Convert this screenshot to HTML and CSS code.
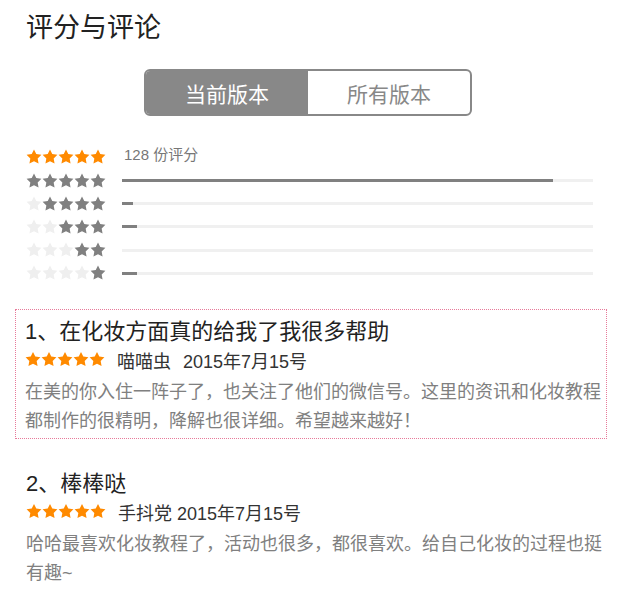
FILE: index.html
```html
<!DOCTYPE html>
<html lang="zh-CN">
<head>
    <meta charset="UTF-8">
    <meta name="viewport" content="width=device-width, initial-scale=1.0">
    <title>评分与评论</title>
    <link rel="stylesheet" href="styles.css">
</head>
<body>
    <svg class="defs" width="0" height="0">
        <symbol id="star" viewBox="0 0 24 24">
            <path d="M12 0.6l3.4 7 7.7 1.1-5.6 5.4 1.35 7.7L12 18.2l-6.85 3.6 1.35-7.7-5.6-5.4 7.7-1.1z"/>
        </symbol>
    </svg>

    <div class="page">
        <h2 class="title">评分与评论</h2>

        <div class="tabs">
            <div class="tab active">当前版本</div>
            <div class="tab">所有版本</div>
        </div>

        <div class="ratings">
            <div class="rating-row first">
                <div class="stars orange">
                    <svg><use href="#star"/></svg><svg><use href="#star"/></svg><svg><use href="#star"/></svg><svg><use href="#star"/></svg><svg><use href="#star"/></svg>
                </div>
                <span class="count">128 份评分</span>
            </div>
            <div class="rating-row">
                <div class="stars">
                    <svg><use href="#star"/></svg><svg><use href="#star"/></svg><svg><use href="#star"/></svg><svg><use href="#star"/></svg><svg><use href="#star"/></svg>
                </div>
                <div class="bar"><div class="fill" style="width: 91.5%"></div></div>
            </div>
            <div class="rating-row">
                <div class="stars">
                    <svg class="off"><use href="#star"/></svg><svg><use href="#star"/></svg><svg><use href="#star"/></svg><svg><use href="#star"/></svg><svg><use href="#star"/></svg>
                </div>
                <div class="bar"><div class="fill" style="width: 2.4%"></div></div>
            </div>
            <div class="rating-row">
                <div class="stars">
                    <svg class="off"><use href="#star"/></svg><svg class="off"><use href="#star"/></svg><svg><use href="#star"/></svg><svg><use href="#star"/></svg><svg><use href="#star"/></svg>
                </div>
                <div class="bar"><div class="fill" style="width: 3.2%"></div></div>
            </div>
            <div class="rating-row">
                <div class="stars">
                    <svg class="off"><use href="#star"/></svg><svg class="off"><use href="#star"/></svg><svg class="off"><use href="#star"/></svg><svg><use href="#star"/></svg><svg><use href="#star"/></svg>
                </div>
                <div class="bar"><div class="fill" style="width: 0%"></div></div>
            </div>
            <div class="rating-row">
                <div class="stars">
                    <svg class="off"><use href="#star"/></svg><svg class="off"><use href="#star"/></svg><svg class="off"><use href="#star"/></svg><svg class="off"><use href="#star"/></svg><svg><use href="#star"/></svg>
                </div>
                <div class="bar"><div class="fill" style="width: 3.2%"></div></div>
            </div>
        </div>

        <div class="review boxed">
            <h3 class="review-title">1、在化妆方面真的给我了我很多帮助</h3>
            <div class="review-meta">
                <div class="stars orange big">
                    <svg><use href="#star"/></svg><svg><use href="#star"/></svg><svg><use href="#star"/></svg><svg><use href="#star"/></svg><svg><use href="#star"/></svg>
                </div>
                <span class="author">喵喵虫</span>
                <span class="date">2015年7月15号</span>
            </div>
            <p class="review-text">在美的你入住一阵子了，也关注了他们的微信号。这里的资讯和化妆教程都制作的很精明，降解也很详细。希望越来越好！</p>
        </div>

        <div class="review">
            <h3 class="review-title">2、棒棒哒</h3>
            <div class="review-meta">
                <div class="stars orange big">
                    <svg><use href="#star"/></svg><svg><use href="#star"/></svg><svg><use href="#star"/></svg><svg><use href="#star"/></svg><svg><use href="#star"/></svg>
                </div>
                <span class="author tight">手抖党</span>
                <span class="date">2015年7月15号</span>
            </div>
            <p class="review-text">哈哈最喜欢化妆教程了，活动也很多，都很喜欢。给自己化妆的过程也挺有趣~</p>
        </div>
    </div>
</body>
</html>
```

FILE: styles.css
```css
body {
    margin: 0;
    font-family: "Liberation Sans", "Noto Sans CJK SC", sans-serif;
    color: #333;
    background: #fff;
}
.defs {
    position: absolute;
}
.page {
    padding: 10px 14px 0 15px;
}
.title {
    margin: 0 0 0 11px;
    font-size: 27px;
    font-weight: normal;
    line-height: 36px;
    color: #222;
}
.tabs {
    display: flex;
    width: 324px;
    height: 43px;
    margin: 23px 0 0 129px;
    border: 2px solid #888;
    border-radius: 6px;
    overflow: hidden;
}
.tab {
    flex: 1;
    display: flex;
    align-items: center;
    justify-content: center;
    font-size: 21px;
    color: #888;
}
.tab.active {
    background-color: #888;
    color: #fff;
}
.ratings {
    margin: 28px 0 0 11px;
}
.rating-row {
    display: flex;
    align-items: center;
    height: 23.2px;
}
.rating-row.first {
    height: 25px;
}
.stars {
    display: flex;
    width: 96px;
    flex-shrink: 0;
}
.stars svg {
    width: 16px;
    height: 16px;
    fill: #808080;
}
.stars svg.off {
    fill: #efefef;
}
.stars.orange svg {
    fill: #ff8a00;
}
.stars.big {
    width: auto;
}
.stars.big svg {
    width: 16px;
    height: 17px;
}
.count {
    margin-left: 2px;
    font-size: 15px;
    color: #777;
    position: relative;
    top: -3px;
}
.bar {
    width: 471px;
    height: 3px;
    background-color: #f0f0f0;
}
.fill {
    height: 100%;
    background-color: #808080;
}
.review {
    margin-top: 30px;
    padding: 0 4px 0 11px;
}
.review.boxed {
    margin-top: 24px;
    padding: 7px 4px 2px 9px;
    border: 1px dotted #e77a9a;
}
.review-title {
    margin: 0;
    font-size: 22px;
    font-weight: normal;
    line-height: 30px;
    color: #222;
}
.review-meta {
    display: flex;
    align-items: center;
    height: 26px;
    font-size: 18px;
    color: #333;
}
.author {
    margin-left: 12px;
    margin-right: 12px;
}
.author.tight {
    margin-right: 5px;
}
.review-text {
    margin: 5px 0 0;
    font-size: 18px;
    line-height: 29px;
    color: #808080;
}
```
